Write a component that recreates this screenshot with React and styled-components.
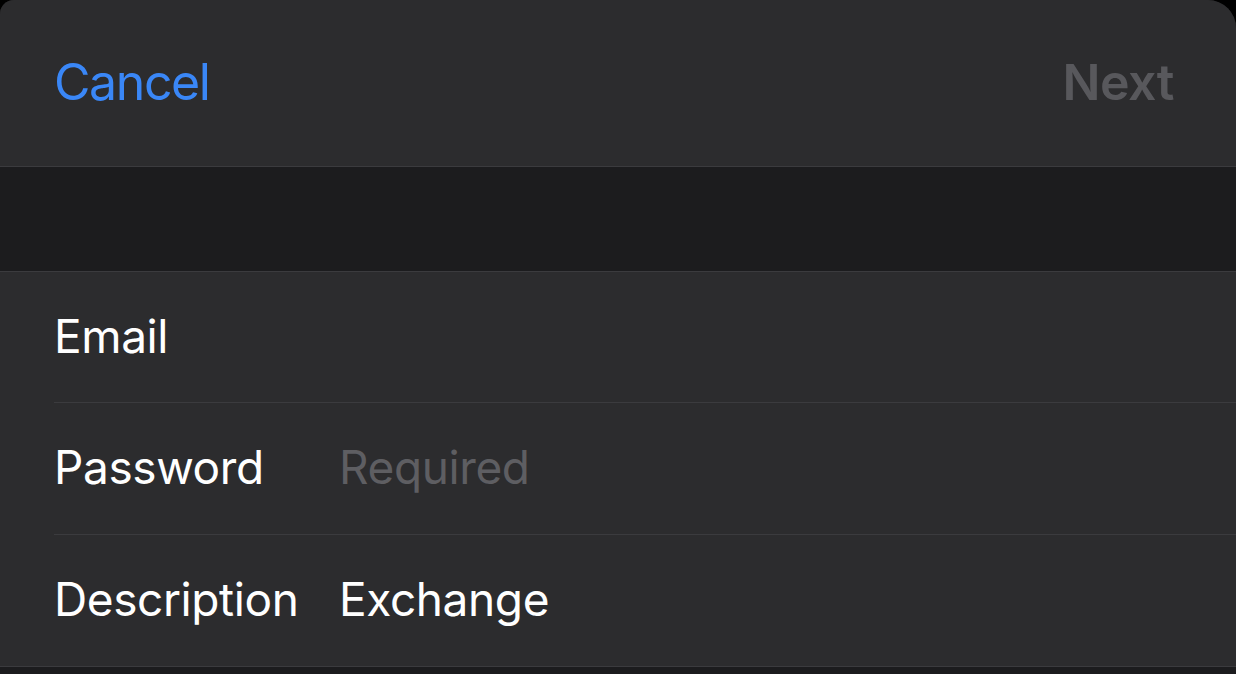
import React from "react";
import styled, { createGlobalStyle } from "styled-components";

const GlobalStyle = createGlobalStyle`
  html, body {
    margin: 0;
    padding: 0;
    background: #000;
    font-family: Inter, "Noto Sans", sans-serif;
    -webkit-font-smoothing: antialiased;
  }
`;

const Sheet = styled.div`
  width: 1236px;
  height: 674px;
  overflow: hidden;
  background: #1c1c1e;
  border-radius: 14px 28px 0 0;
`;

const NavBar = styled.div`
  height: 167px;
  display: flex;
  align-items: center;
  justify-content: space-between;
  padding: 0 62px 2px 54px;
  background: #2c2c2e;
  border-bottom: 1px solid #3b3b3e;
  box-sizing: border-box;
`;

const NavButton = styled.span`
  font-size: 50px;
  font-weight: ${(props) => (props.bold ? 600 : 400)};
  color: ${(props) => props.color};
  letter-spacing: ${(props) => (props.bold ? "-0.5px" : "-1.4px")};
`;

const Spacer = styled.div`
  height: 104px;
  border-bottom: 1px solid #3b3b3e;
`;

const Group = styled.div`
  background: #2c2c2e;
  border-bottom: 1px solid #3b3b3e;
`;

const Row = styled.div`
  height: ${(props) => (props.last ? "131px" : "132px")};
  margin-left: 54px;
  padding-bottom: 3px;
  display: grid;
  grid-template-columns: 285px 1fr;
  align-items: center;
  border-bottom: ${(props) => (props.last ? "none" : "1px solid #3b3b3e")};
  box-sizing: border-box;

  &:first-child {
    height: 131px;
  }
`;

const Label = styled.span`
  font-size: 46px;
  color: #fff;
  letter-spacing: -0.4px;
`;

const Value = styled.span`
  font-size: 46px;
  color: ${(props) => (props.placeholder ? "#5e5e62" : "#fff")};
  letter-spacing: -0.4px;
`;

const rows = [
  { label: "Email", value: "" },
  { label: "Password", value: "Required", placeholder: true },
  { label: "Description", value: "Exchange" },
];

export default function App() {
  return (
    <>
      <GlobalStyle />
      <Sheet>
        <NavBar>
          <NavButton color="#3a87f7">Cancel</NavButton>
          <NavButton color="#58585c" bold>
            Next
          </NavButton>
        </NavBar>
        <Spacer />
        <Group>
          {rows.map((r, i) => (
            <Row key={r.label} last={i === rows.length - 1}>
              <Label>{r.label}</Label>
              <Value placeholder={r.placeholder}>{r.value}</Value>
            </Row>
          ))}
        </Group>
      </Sheet>
    </>
  );
}
